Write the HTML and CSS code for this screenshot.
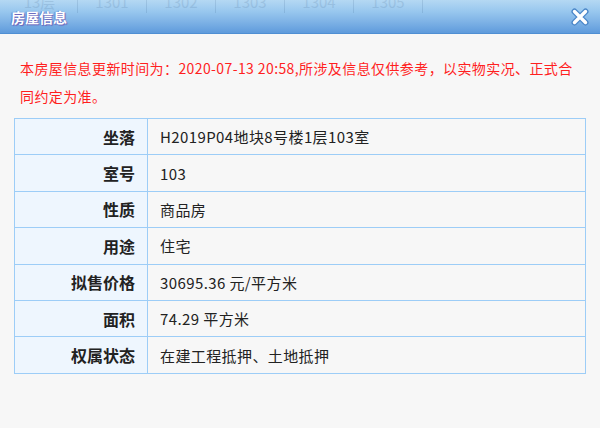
FILE: index.html
```html
<!DOCTYPE html>
<html lang="zh-CN">
<head>
<meta charset="utf-8">
<title>房屋信息</title>
<link rel="stylesheet" href="styles.css">
</head>
<body>
<div class="dialog">
  <div class="titlebar">
    <div class="ghost" aria-hidden="true">
      <span class="ghost-floor">13层</span>
      <span class="ghost-cell">1301</span>
      <span class="ghost-cell">1302</span>
      <span class="ghost-cell">1303</span>
      <span class="ghost-cell">1304</span>
      <span class="ghost-cell">1305</span>
    </div>
    <span class="title">房屋信息</span>
    <button class="close" aria-label="关闭">
      <svg width="20" height="20" viewBox="0 0 20 20">
        <path d="M4.5 4.5 L15.5 15.5 M15.5 4.5 L4.5 15.5" stroke="#4a86c8" stroke-width="6" stroke-linecap="round" fill="none"/>
        <path d="M4.5 4.5 L15.5 15.5 M15.5 4.5 L4.5 15.5" stroke="#ffffff" stroke-width="3.4" stroke-linecap="round" fill="none"/>
      </svg>
    </button>
  </div>
  <div class="content">
    <p class="notice">本房屋信息更新时间为：2020-07-13 20:58,所涉及信息仅供参考，以实物实况、正式合同约定为准。</p>
    <table class="info">
      <tr><th>坐落</th><td>H2019P04地块8号楼1层103室</td></tr>
      <tr><th>室号</th><td>103</td></tr>
      <tr><th>性质</th><td>商品房</td></tr>
      <tr><th>用途</th><td>住宅</td></tr>
      <tr><th>拟售价格</th><td>30695.36 元/平方米</td></tr>
      <tr><th>面积</th><td>74.29 平方米</td></tr>
      <tr><th>权属状态</th><td>在建工程抵押、土地抵押</td></tr>
    </table>
  </div>
</div>
</body>
</html>
```

FILE: styles.css
```css
html, body {
  margin: 0;
  padding: 0;
  background: #f7f7f7;
}
body {
  width: 600px;
  height: 428px;
  overflow: hidden;
  font-family: "Noto Sans CJK SC", "Noto Sans", sans-serif;
}
.dialog {
  display: flex;
  flex-direction: column;
}
.titlebar {
  position: relative;
  height: 33px;
  border-bottom: 1px solid #4f8fd3;
  background: linear-gradient(to bottom, #b5d8f3 0%, #98c7ee 35%, #7fb3e6 65%, #5f9bdc 100%);
  display: flex;
  align-items: center;
  justify-content: space-between;
  padding: 0 10px 0 11px;
}
.ghost {
  position: absolute;
  left: 0;
  top: -9px;
  height: 22px;
  display: flex;
  opacity: 0.12;
  color: #1a3f6a;
  font-size: 15px;
  pointer-events: none;
}
.ghost-floor {
  width: 75px;
  text-align: center;
  border-right: 1px solid #1a3f6a;
  padding-left: 2px;
}
.ghost-cell {
  width: 68px;
  text-align: center;
  border-right: 1px solid #1a3f6a;
}
.title {
  position: relative;
  color: #ffffff;
  font-size: 14px;
  font-weight: bold;
  text-shadow: 1px 1px 1px #6a5fb8, -1px 0 1px #5a80d0;
}
.close {
  position: relative;
  border: 0;
  background: none;
  padding: 0;
  margin-top: 0;
  width: 20px;
  height: 20px;
  display: block;
}
.close svg { display: block; }
.content {
  padding: 20px 14px 0 14px;
}
.notice {
  margin: 0 0 8px 0;
  padding: 0 6px;
  color: #ff1f1f;
  font-size: 14px;
  line-height: 28px;
  letter-spacing: 0.4px;
}
.info {
  width: 572px;
  border-collapse: collapse;
  border: 1px solid #9dcdf7;
}
.info th, .info td {
  border: 1px solid #9dcdf7;
  height: 35.4px;
  padding: 0 12px;
  color: #222;
}
.info th {
  width: 108px;
  background: #eef6fe;
  text-align: right;
  font-weight: bold;
  font-size: 16px;
}
.info td {
  text-align: left;
  background: #f7f7f7;
  font-size: 15px;
  letter-spacing: 0.4px;
}
```
